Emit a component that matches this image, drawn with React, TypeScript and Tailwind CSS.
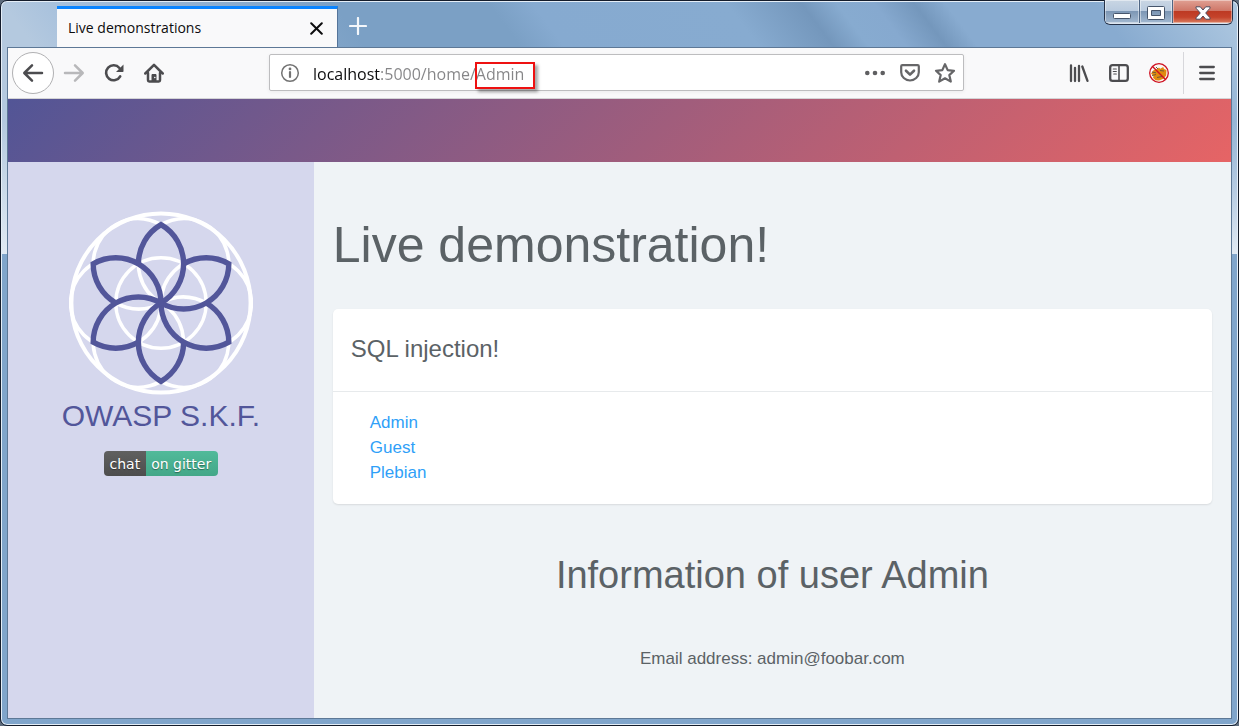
import React from "react";

const USERS = ["Admin", "Guest", "Plebian"];

const R = 45.2;
const H = 39.15;
const ANGLES = [0, 60, 120, 180, 240, 300];

function FlowerLogo() {
  return (
    <svg width="184" height="184" viewBox="-92 -92 184 184" fill="none" role="img" aria-label="OWASP S.K.F. logo">
      <g stroke="#fff" strokeWidth="4">
        <circle r="89.600" />
        <circle r={R} strokeWidth="3.4" />
        {ANGLES.map((a) => (
          <circle key={a} cx={R} r={R} transform={`rotate(${a})`} strokeWidth="3.6" />
        ))}
      </g>
      <g stroke="#52569a" strokeWidth="5.4" strokeLinejoin="miter">
        {ANGLES.map((a) => (
          <path
            key={a}
            transform={`rotate(${a})`}
            d={`M0 0A${R} ${R} 0 0 0 0 ${-2 * H}A${R} ${R} 0 0 0 -22.6 ${-H}`}
          />
        ))}
      </g>
    </svg>
  );
}

function TitleBar() {
  return (
    <div className="flex h-[46px] items-stretch pl-[50px]">
      <div className="mt-[5px] flex w-[281px] items-center justify-between border-t-[3px] border-r border-t-[#0a84ff] border-r-[#54749a] bg-[#f9f9fa] pr-[13px] pl-[11px]">
        <span className="font-['Open_Sans',sans-serif] text-[14px] leading-5 text-[#0c0c0d]">Live demonstrations</span>
        <button aria-label="Close tab" className="grid size-4 place-items-center">
          <svg width="13" height="13" viewBox="0 0 13 13" stroke="#0c0c0d" strokeWidth="2" strokeLinecap="round">
            <path d="M1.2 1.2l10.6 10.6M11.8 1.2L1.2 11.8" />
          </svg>
        </button>
      </div>
      <button aria-label="New tab" className="ml-[10px] grid w-5 place-items-center pt-1">
        <svg width="18" height="18" viewBox="0 0 18 18" stroke="#f4f7fb" strokeWidth="2.2" strokeLinecap="round">
          <path d="M9 1v16M1 9h16" />
        </svg>
      </button>
      <div className="-mt-px -mr-px ml-auto flex h-[25px] overflow-hidden rounded-b-md border border-t-0 border-[#26334a] bg-[#dce6f1] pb-px">
        <button
          aria-label="Minimize"
          className="grid w-[35px] place-items-center border-r border-[#4f6684] bg-[linear-gradient(#c9d6e4_0,#b9cade_48%,#7d97b5_50%,#a2b8d0)] pt-[9px] shadow-[inset_0_0_0_1px_rgba(255,255,255,0.45)]"
        >
          <svg width="18" height="6" viewBox="0 0 18 6">
            <rect x=".5" y=".5" width="17" height="5" rx="1" fill="#fff" stroke="#46556b" />
          </svg>
        </button>
        <button
          aria-label="Maximize"
          className="grid w-[33px] place-items-center border-r border-[#4f6684] bg-[linear-gradient(#c9d6e4_0,#b9cade_48%,#7d97b5_50%,#a2b8d0)] pt-[2px] shadow-[inset_0_0_0_1px_rgba(255,255,255,0.45)]"
        >
          <svg width="18" height="14" viewBox="0 0 18 14" stroke="#46556b">
            <path d="M.5 1.5a1 1 0 0 1 1-1h15a1 1 0 0 1 1 1v11a1 1 0 0 1-1 1h-15a1 1 0 0 1-1-1zM4.500 4.500v5h9v-5z" fill="#fff" fillRule="evenodd" />
          </svg>
        </button>
        <button
          aria-label="Close"
          className="grid w-[59px] place-items-center bg-[linear-gradient(#e0a093,#cf7768_46%,#bd3a23_50%,#c5432b_75%,#d97f62)] pt-[2px] shadow-[inset_0_0_0_1px_rgba(255,255,255,0.4)]"
        >
          <svg width="16" height="14" viewBox="0 0 16 14">
            <path d="M1 .8h4.300L8 4 10.700.8H15v1.400L10.700 7 15 11.800v1.400h-4.300L8 10l-2.700 3.200H1v-1.400L5.300 7 1 2.200z" fill="#fff" stroke="#4c4a5c" />
          </svg>
        </button>
      </div>
    </div>
  );
}

function BlockedFox() {
  return (
    <svg width="22" height="22" viewBox="0 0 22 22" fill="none">
      <circle cx="11" cy="11" r="9" fill="#fbf8f4" />
      <path d="M3 11.500l2.500-3.300 4-1.200 1.500-1.500 1.200 1.300 3-1.800.8 2 2.500 1-.3 5.500-2.700 3.200-4.500 1.800-3.500-.2-2.500-2.500.5-2z" fill="#e08a10" />
      <path d="M4 10l4 .8M4 13.500l4-1M9 15.500l5-1M12 8.500l4 .5M8 5l2 2" stroke="#6f5a3a" />
      <circle cx="11" cy="11" r="9.300" stroke="#cf1020" strokeWidth="1.300" />
      <path d="M4.500 4.500l13 13" stroke="#cf1020" strokeWidth="1.400" />
    </svg>
  );
}

function Toolbar() {
  return (
    <div className="flex h-[51px] items-center border-b border-[#d4d4d6] bg-[#f9f9fa] pr-[14px] pl-1">
      <button aria-label="Back" className="grid size-[42px] shrink-0 place-items-center rounded-full border border-[#b1b1b3] bg-white">
        <svg width="22" height="20" viewBox="0 0 22 20" fill="none" stroke="#4c4c4f" strokeWidth="2.500" strokeLinecap="round" strokeLinejoin="round">
          <path d="M20 10H2.500M10 2.300L2.300 10l7.700 7.700" />
        </svg>
      </button>
      <button aria-label="Forward" className="ml-[9px] grid size-[22px] shrink-0 place-items-center">
        <svg width="22" height="20" viewBox="0 0 22 20" fill="none" stroke="#b8b8ba" strokeWidth="2.500" strokeLinecap="round" strokeLinejoin="round">
          <path d="M2 10h17.500M12 2.300l7.700 7.700-7.700 7.700" />
        </svg>
      </button>
      <button aria-label="Reload" className="ml-[18px] grid size-[22px] shrink-0 place-items-center">
        <svg width="20" height="20" viewBox="0 0 20 20" fill="none">
          <path d="M16.200 13.300A7.500 7.500 0 1 1 15.400 5" stroke="#4c4c4f" strokeWidth="2.600" strokeLinecap="round" />
          <path d="M19.500 1.500v6.700a.8.800 0 0 1-.8.800H12z" fill="#4c4c4f" />
        </svg>
      </button>
      <button aria-label="Home" className="ml-[18px] grid size-[22px] shrink-0 place-items-center">
        <svg width="20" height="20" viewBox="0 0 20 20" fill="none" stroke="#4c4c4f" strokeLinejoin="round" strokeLinecap="round">
          <path d="M1.300 10.500L10 1.800l8.700 8.700" strokeWidth="2.500" />
          <path d="M4 10v7.300c0 .8.400 1.200 1.200 1.200h9.600c.8 0 1.200-.4 1.200-1.200V10" strokeWidth="2.500" />
          <path d="M8 18v-6.500h4V18z" fill="#4c4c4f" strokeWidth="1" />
          <circle cx="10.800" cy="14.500" r=".8" fill="#f9f9fa" stroke="none" />
        </svg>
      </button>

      <div className="relative mr-[95px] mb-px ml-[104px] flex h-[37px] flex-1 items-center rounded-xs border border-[#bdbdbf] bg-white pr-[7px] pl-[10px] shadow-[0_1px_4px_rgba(0,0,0,0.06)]">
        <button aria-label="Site information" className="shrink-0">
          <svg width="20" height="20" viewBox="0 0 20 20" fill="none" className="block">
            <circle cx="10" cy="10" r="8.300" stroke="#737373" strokeWidth="1.500" />
            <path d="M10 9v5" stroke="#737373" strokeWidth="2.200" strokeLinecap="round" />
            <circle cx="10" cy="5.900" r="1.400" fill="#737373" />
          </svg>
        </button>
        <input
          aria-label="Address"
          defaultValue="localhost:5000/home/Admin"
          className="ml-[13px] min-w-0 flex-1 bg-[linear-gradient(90deg,#0c0c0d_67px,#858587_67px)] bg-clip-text pt-[2px] font-['Open_Sans',sans-serif] text-[16px] leading-6 text-transparent caret-black outline-none"
        />
        <div className="absolute top-[7px] left-[205px] h-[27px] w-[60px] border-2 border-[#ee1111] shadow-[3px_3px_3px_rgba(0,0,0,0.35)]" />
        <div className="flex shrink-0 items-center gap-[14px] text-[#737373]">
          <button aria-label="Page actions">
            <svg width="22" height="22" viewBox="0 0 22 22" fill="#5f5f61" className="block">
              <circle cx="3.300" cy="11" r="2.300" />
              <circle cx="11" cy="11" r="2.300" />
              <circle cx="18.700" cy="11" r="2.300" />
            </svg>
          </button>
          <button aria-label="Save to Pocket">
            <svg width="20" height="20" viewBox="0 0 20 20" fill="none" stroke="#666668" strokeWidth="2.200" strokeLinecap="round" strokeLinejoin="round" className="block">
              <path d="M2.400 2.100h15.200a1.200 1.200 0 0 1 1.200 1.200v5.900a8.800 8.300 0 0 1-17.600 0V3.300a1.200 1.200 0 0 1 1.200-1.200z" />
              <path d="M6 7.700l4 3.900 4-3.900" strokeWidth="2.600" />
            </svg>
          </button>
          <button aria-label="Bookmark">
            <svg width="22" height="22" viewBox="0 0 22 22" fill="none" stroke="#666668" strokeWidth="2.200" strokeLinejoin="round" className="block">
              <path d="M11 2.200l2.700 5.900 6.300.7-4.700 4.300 1.500 6.500L11 16.300l-5.800 3.300 1.500-6.500L2 8.800l6.300-.7z" />
            </svg>
          </button>
        </div>
      </div>

      <div className="flex shrink-0 items-center">
        <button aria-label="Library" className="grid w-10 place-items-center">
          <svg width="20" height="20" viewBox="0 0 20 20" stroke="#4c4c4f" strokeWidth="2.300" strokeLinecap="round">
            <path d="M2 2.500v15.500M6 4.800v13.200M10 3v15" />
            <path d="M13.300 3.500l5.200 14.300" />
          </svg>
        </button>
        <button aria-label="Sidebars" className="grid w-10 place-items-center">
          <svg width="20" height="18" viewBox="0 0 20 18" fill="none" stroke="#4c4c4f" strokeLinecap="round">
            <rect x="1.200" y="1.200" width="17.600" height="15.600" rx="2.400" strokeWidth="2.300" />
            <path d="M10 1.500v15" strokeWidth="1.600" />
            <path d="M4.300 5h3M4.300 7.500h3M4.800 10h2.500" strokeWidth="1.200" />
          </svg>
        </button>
        <button aria-label="Blocked extension" className="grid w-10 place-items-center">
          <BlockedFox />
        </button>
        <div className="ml-1 h-[42px] w-px bg-[#d7d7db]" />
        <button aria-label="Menu" className="ml-[13px] grid w-5 place-items-center">
          <svg width="16" height="16" viewBox="0 0 16 16" stroke="#4c4c4f" strokeWidth="2.300" strokeLinecap="round">
            <path d="M1.200 2h13.600M1.200 8h13.600M1.200 14h13.600" />
          </svg>
        </button>
      </div>
    </div>
  );
}

function Sidebar() {
  return (
    <aside className="flex w-1/4 flex-col items-center bg-[#d5d7ed] pt-[49px]">
      <FlowerLogo />
      <h2 className="mt-px text-[30px] leading-10 text-[#52569a]">OWASP S.K.F.</h2>
      <a
        href="#gitter"
        className="mt-[15px] flex h-[25px] overflow-hidden rounded-sm font-['DejaVu_Sans',sans-serif] text-[14px] leading-[26px] text-white [text-shadow:0_1px_1px_rgba(0,0,0,0.4)]"
      >
        <span className="bg-linear-to-b from-[#606060] to-[#4d4d4d] px-[6px]">chat</span>
        <span className="bg-linear-to-b from-[#51ba9a] to-[#43a788] pr-[7px] pl-[5px]">on gitter</span>
      </a>
    </aside>
  );
}

export default function App() {
  return (
    <div className="flex min-h-screen flex-col bg-[#5d6b7c] font-['Liberation_Sans',Arial,sans-serif]">
      <div className="flex flex-1 flex-col rounded-[7px] border border-[#141c2b] bg-[#80a5cb] bg-[linear-gradient(180deg,transparent_120px,#e0e9f3_252px),linear-gradient(53deg,#b4c9df_152px,#a6c0dc_200px,#7ba0c5_416px,#7ba0c5_540px,#86aad0_575px,#87abd0_730px,#7497bc_790px,#87abd0_818px,#86a9cf_848px,#7497bc_880px,#88abd0_905px,#88abd0_1024px,#a9c4de_1120px)] bg-[length:100%_253px,100%_253px] bg-no-repeat px-[6px] pb-[6px] shadow-[inset_0_0_0_1px_#e5eef7]">
        <TitleBar />
        <div className="flex flex-1 flex-col border border-[#5d7896]">
          <Toolbar />
          <header className="h-[63px] bg-[linear-gradient(135deg,#525596,#e66465)]" />
          <div className="flex flex-1">
            <Sidebar />
            <main className="flex-1 bg-[#eff3f6] px-[19px] pt-[53px] text-[#5b6266]">
              <h1 className="text-[50px] leading-[60px]">Live demonstration!</h1>
              <section className="mt-[34px] rounded-[5px] bg-white shadow-[0_1px_2px_rgba(0,0,0,0.1)]">
                <h3 className="border-b border-[#e7eaec] px-[18px] pt-[25px] pb-[27px] text-[24px] leading-[30px]">SQL injection!</h3>
                <ul className="px-[37px] pt-[18px] pb-[19px] text-[17px] leading-[25px] text-[#2f9ff8]">
                  {USERS.map((u) => (
                    <li key={u}>
                      <a href={`#/home/${u}`}>{u}</a>
                    </li>
                  ))}
                </ul>
              </section>
              <div className="mt-12 text-center">
                <h2 className="text-[38px] leading-[46px]">Information of user Admin</h2>
                <p className="mt-12 text-[17px] leading-[25px]">Email address: admin@foobar.com</p>
              </div>
            </main>
          </div>
        </div>
      </div>
    </div>
  );
}
